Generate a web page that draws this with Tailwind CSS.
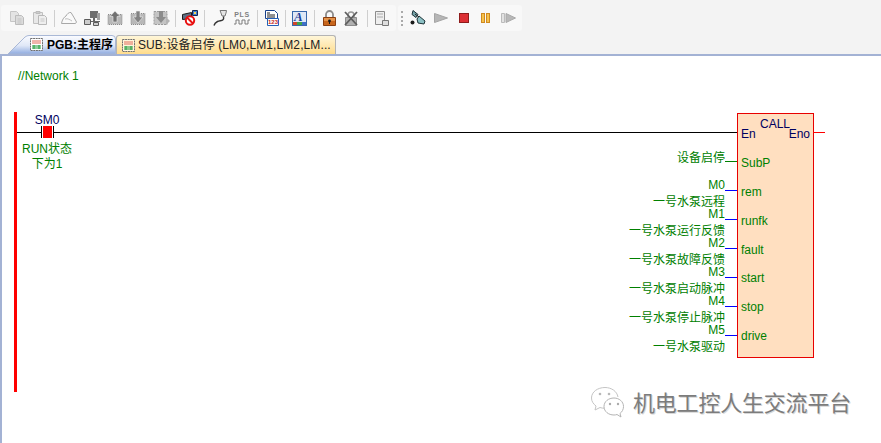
<!DOCTYPE html>
<html lang="en">
<head>
  <meta charset="UTF-8">
  <title>PGB</title>
  <script src="https://cdn.jsdelivr.net/npm/@tailwindcss/browser@4"></script>
</head>
<body class="w-[881px] h-[443px] overflow-hidden bg-white font-['Liberation_Sans','Noto_Sans_CJK_SC',sans-serif]">
  <!-- toolbar -->
  <div class="h-[33px] bg-[#f3f3f3] flex items-start pt-[5px] pl-[1px]">
    <div class="h-[26px] w-[395px] bg-[#f8f8f8] rounded-[3px] flex items-center pl-[9px]">
      <!-- copy -->
      <svg class="w-[14px] h-[14px]" viewBox="0 0 14 14"><path d="M.5.5h6l2 2v8h-8z" fill="#e4e4e4" stroke="#c6c6c6"/><path d="M5.500 4.500h6l2 2v7h-8z" fill="#dcdcdc" stroke="#bcbcbc"/><path d="M7.500 8h4M7.500 10h4M7.500 12h4" stroke="#c4c4c4"/></svg>
      <!-- paste -->
      <svg class="w-[14px] h-[14px] ml-[9px]" viewBox="0 0 14 14"><path d="M.5 1.500h9v11h-9z" fill="#e8e8e8" stroke="#c0c0c0"/><path d="M3 .5h4v2H3z" fill="#ccc" stroke="#bbb"/><path d="M5.500 4.500h6l2 2v7h-8z" fill="#eee" stroke="#b8b8b8"/><path d="M7.500 8h4M7.500 10h4" stroke="#c8c8c8"/></svg>
      <div class="w-px h-[17px] bg-[#cfcfcf] ml-[7px]"></div>
      <!-- cloud -->
      <svg class="w-4 h-[14px] ml-[6px]" viewBox="0 0 16 14"><path d="M.5 12.500C1 9 3 6 5 5c1-2 3-4 5-3.500 1.500 3 4 6 5.500 9.500l-1 1.500z" fill="#fafafa" stroke="#a8a8a8"/><path d="M4 8c3-1 5 1 7 2" fill="none" stroke="#c0c0c0"/></svg>
      <!-- network -->
      <svg class="w-4 h-4 ml-[7px]" viewBox="0 0 16 16"><path d="M6 1h8v7H6z" fill="#6e6e6e"/><path d="M13 3h3v7h-3z" fill="#a0a0a0"/><path d="M9 8h2v4H9zM0 11h16v1H0z" fill="#666"/><path d="M.5 9.500h6v5h-6zM9.500 12.500h5v3h-5z" fill="#ccc" stroke="#5c5c5c"/></svg>
      <!-- upload -->
      <svg class="w-4 h-4 ml-[7px]" viewBox="0 0 16 16"><path d="M1 4.500h14v10H1z" fill="#b8b8b8" stroke="#8c8c8c" stroke-dasharray="1 1"/><path d="M8 1l5 5.500h-3V12H6V6.500H3z" fill="#727272" stroke="#eee" stroke-width=".6"/></svg>
      <!-- download -->
      <svg class="w-4 h-4 ml-[7px]" viewBox="0 0 16 16"><path d="M1 3.500h14v11H1z" fill="#b8b8b8" stroke="#8c8c8c" stroke-dasharray="1 1"/><path d="M6 1h4v6h3l-5 6-5-6h3z" fill="#828282" stroke="#eee" stroke-width=".6"/></svg>
      <!-- compare -->
      <svg class="w-[17px] h-4 ml-[7px]" viewBox="0 0 17 16"><path d="M1 1.500h13v13H1z" fill="#c4c4c4" stroke="#9c9c9c" stroke-dasharray="2 1"/><path d="M6 1h4v6h3l-5 6-5-6h3z" fill="#8c8c8c"/><path d="M13 7l4 4-4 4z" fill="#b4b4b4"/></svg>
      <div class="w-px h-[17px] bg-[#cfcfcf] ml-[5px]"></div>
      <!-- no comm -->
      <svg class="w-4 h-4 ml-[6px]" viewBox="0 0 16 16"><path d="M.5 4.500l9-2v6l-9 1z" fill="#5d6f84" stroke="#1c1c1c"/><path d="M10.500.5h5v5h-5z" fill="#3f7fd0" stroke="#14264d"/><path d="M12 2h2v2h-2z" fill="#f5d458"/><circle cx="8" cy="10.500" r="4.200" fill="#fff" stroke="#e81010" stroke-width="2"/><path d="M5 7.500l6 6" stroke="#e81010" stroke-width="2"/></svg>
      <div class="w-px h-[17px] bg-[#cfcfcf] ml-[6px]"></div>
      <!-- cable -->
      <svg class="w-[15px] h-4 ml-[7px]" viewBox="0 0 15 16"><path d="M8 .5h6.500L14 3l-1 3h-3L9 3z" fill="#e4e4e4" stroke="#777"/><path d="M11.500 6.500c1 5-3 3.500-6 5-2 1-3 2-3.500 4" fill="none" stroke="#333" stroke-width="1.400"/></svg>
      <!-- PLS pulse -->
      <div class="w-4 h-[14px] ml-[7px] flex flex-col items-center text-[#808080] leading-none">
        <span class="text-[7px] font-bold h-[8px] tracking-[.6px]">PLS</span>
        <svg class="w-4 h-[6px]" viewBox="0 0 16 6"><path d="M0 5h2V1h3v4h3V1h3v4h3V1h2" fill="none" stroke="#7c7c7c"/></svg>
      </div>
      <div class="w-px h-[17px] bg-[#cfcfcf] ml-[7px]"></div>
      <!-- symbol table -->
      <div class="relative w-[14px] h-4 ml-[7px] overflow-hidden">
        <svg class="w-[14px] h-4" viewBox="0 0 14 16"><path d="M.5.5h9l3 3v5h-12z" fill="#fff" stroke="#17408b"/><path d="M2 3h3M2 5h8M2 7h8" stroke="#222"/><path d="M2.500 8.500h11v7h-11z" fill="#fff" stroke="#2460b8"/></svg>
        <span class="absolute left-[3px] top-[9px] text-[6px] leading-[6px] font-bold text-[#c8281c] whitespace-nowrap">123</span>
      </div>
      <div class="w-px h-[17px] bg-[#cfcfcf] ml-[6px]"></div>
      <!-- font -->
      <div class="relative w-[15px] h-[15px] ml-[6px] bg-[#dfe8f6] border border-[#3768ac]">
        <span class="absolute left-[1px] -top-[2px] text-[13px] leading-[13px] font-['Liberation_Serif',serif] font-bold italic text-[#1d3f9a]">A</span>
        <div class="absolute left-0 bottom-0 flex h-[3px] w-full">
          <div class="w-1/3 bg-[#d0452a]"></div>
          <div class="w-1/3 bg-[#3ea34a]"></div>
          <div class="w-1/3 bg-[#3e6fca]"></div>
        </div>
      </div>
      <div class="w-px h-[17px] bg-[#cfcfcf] ml-[7px]"></div>
      <!-- lock -->
      <svg class="w-[13px] h-4 ml-2" viewBox="0 0 13 16"><path d="M3 8V4.500a3.500 3.500 0 0 1 7 0V8" fill="none" stroke="#8c8c8c" stroke-width="1.800"/><path d="M.5 7.500h12v8H.5z" fill="#c8661c" stroke="#8a3e10"/><path d="M1 8h11v3H1z" fill="#e4934a"/><circle cx="6.500" cy="11" r="1.400" fill="#1a1a1a"/><path d="M6 11h1v3H6z" fill="#1a1a1a"/></svg>
      <!-- unlock crossed -->
      <svg class="w-[14px] h-[15px] ml-2" viewBox="0 0 14 15"><path d="M4 7V4a3 3 0 0 1 6 0v3" fill="none" stroke="#999" stroke-width="1.600"/><path d="M1.500 6.500h11v8h-11z" fill="#b0b0b0" stroke="#8c8c8c"/><path d="M1 1l12 13M13 1 1 14" stroke="#5e5e5e" stroke-width="1.800"/></svg>
      <div class="w-px h-[17px] bg-[#cfcfcf] ml-[9px]"></div>
      <!-- doc -->
      <svg class="w-[14px] h-[15px] ml-[7px]" viewBox="0 0 14 15"><path d="M.5.500h9v13h-9z" fill="#eee" stroke="#8c8c8c"/><path d="M2 3h6M2 6h6" stroke="#aaa"/><path d="M7.500 9.500h6v5h-6z" fill="#dedede" stroke="#777"/></svg>
    </div>
    <div class="h-[26px] w-[124px] bg-[#f8f8f8] rounded-[3px] ml-[2px] flex items-center">
      <div class="w-px h-[15px] ml-[3px] border-l-2 border-dotted border-[#aaa]"></div>
      <!-- run mode -->
      <svg class="w-4 h-4 ml-[7px]" viewBox="0 0 16 16"><path d="M3 .5l5 4-2 3-4-3z" fill="#74a2a8" stroke="#1d3338"/><path d="M9 6l6 5-1 3-6-1-1-4z" fill="#8cc0c4" stroke="#1d3338"/><circle cx="2.500" cy="12.500" r="2" fill="#1a1a1a"/><path d="M5 4l4 3" stroke="#222"/></svg>
      <!-- play -->
      <svg class="w-[14px] h-[10px] ml-[8px]" viewBox="0 0 14 10"><path d="M.5.5l13 4.500-13 4.500z" fill="#b6b6b6" stroke="#a4a4a4"/></svg>
      <!-- stop -->
      <div class="w-[10px] h-[10px] ml-[11px] bg-[#dc3034] border border-[#8e1c1c]"></div>
      <!-- pause -->
      <div class="ml-[12px] flex gap-px">
        <div class="w-1 h-[10px] bg-[#f6c24c] border border-[#d08a20]"></div>
        <div class="w-1 h-[10px] bg-[#f6c24c] border border-[#d08a20]"></div>
      </div>
      <!-- step -->
      <svg class="w-[15px] h-[10px] ml-[11px]" viewBox="0 0 15 10"><path d="M.5.5h3v9h-3z" fill="#e2e2e2" stroke="#bbb"/><path d="M5 .5l9.500 4.500-9.500 4.500z" fill="#b8b8b8" stroke="#a8a8a8"/></svg>
    </div>
  </div>
  <!-- tabs -->
  <div class="h-[21px] bg-[#f3f3f3] flex items-end pl-[8px] text-[12px] leading-none">
    <div class="relative h-[19px] w-[108px] pl-[22px] flex items-center gap-[4px] font-bold text-black">
      <svg class="absolute left-0 top-0 w-[108px] h-[19px]" viewBox="0 0 108 19">
        <defs><linearGradient id="tabfill" x1="0" y1="0" x2="0" y2="1"><stop offset="0" stop-color="#fbfcff"/><stop offset=".55" stop-color="#dfe7f7"/><stop offset="1" stop-color="#8fabe0"/></linearGradient></defs>
        <path d="M0 19 17 2Q19 .5 21 .5H104Q107.500 .5 107.500 4V19z" fill="url(#tabfill)" stroke="#a9b8d6"/>
      </svg>
      <svg class="relative w-[13px] h-[13px] shrink-0" viewBox="0 0 13 13"><path d="M.5.5h12v12H.5z" fill="#fff" stroke="#707070" stroke-dasharray="2 .6"/><path d="M2 3h9M2 5h9" stroke="#e06a5a"/><path d="M2 8h9M2 10h9" stroke="#1e9a3c"/><path d="M4 7v4M9 7v4" stroke="#1e9a3c"/></svg>
      <span class="relative whitespace-nowrap">PGB:主程序</span>
    </div>
    <div class="h-[19px] w-[220px] bg-gradient-to-b from-[#fff6d8] to-[#ffdc8c] border border-b-0 border-[#b4b4b4] rounded-t-[3px] flex items-center pl-[5px] gap-[3px] text-[#222] tracking-[.1px]">
      <svg class="w-[13px] h-[13px] shrink-0" viewBox="0 0 13 13"><path d="M.5.5h12v12H.5z" fill="#fff6dc" stroke="#707070" stroke-dasharray="2 .6"/><path d="M2 3h9M2 5h9" stroke="#e06a5a"/><path d="M2 8h9M2 10h9" stroke="#1e9a3c"/><path d="M4 7v4M9 7v4" stroke="#1e9a3c"/></svg>
      <span class="whitespace-nowrap">SUB:设备启停 (LM0,LM1,LM2,LM...</span>
    </div>
  </div>
  <!-- ladder canvas -->
  <div class="relative h-[389px] bg-white border-t-2 border-l-2 border-[#a3b2d4] text-[12px] leading-[14px] text-[#008000]">
    <div class="absolute left-4 top-[13px]">//Network 1</div>
    <div class="absolute left-[12px] top-[56px] w-[3px] h-[280px] bg-[#ff0000]"></div>
    <div class="absolute left-[15px] top-[76px] w-[720px] h-px bg-black"></div>
    <!-- contact SM0 -->
    <div class="absolute left-[30px] top-[57px] w-[30px] text-center text-[#000060]">SM0</div>
    <div class="absolute left-[39px] top-[70px] w-[13px] h-[12px] bg-white border-x border-black px-px">
      <div class="h-full bg-[#ff0000]"></div>
    </div>
    <div class="absolute left-[15px] top-[86px] w-[60px] text-center leading-[15px]">RUN状态<br>下为1</div>
    <!-- labels on the left of the CALL box -->
    <div class="absolute right-[156px] top-[95px] text-right">设备启停</div>
    <div class="absolute left-[723px] top-[105px] w-3 h-px bg-[#008000]"></div>
    <div class="absolute right-[156px] top-[122px] text-right">M0<div class="mt-[3px]">一号水泵远程</div></div>
    <div class="absolute left-[723px] top-[134px] w-3 h-px bg-[#0000ff]"></div>
    <div class="absolute right-[156px] top-[151px] text-right">M1<div class="mt-[3px]">一号水泵运行反馈</div></div>
    <div class="absolute left-[723px] top-[163px] w-3 h-px bg-[#0000ff]"></div>
    <div class="absolute right-[156px] top-[180px] text-right">M2<div class="mt-[3px]">一号水泵故障反馈</div></div>
    <div class="absolute left-[723px] top-[192px] w-3 h-px bg-[#0000ff]"></div>
    <div class="absolute right-[156px] top-[209px] text-right">M3<div class="mt-[3px]">一号水泵启动脉冲</div></div>
    <div class="absolute left-[723px] top-[221px] w-3 h-px bg-[#0000ff]"></div>
    <div class="absolute right-[156px] top-[238px] text-right">M4<div class="mt-[3px]">一号水泵停止脉冲</div></div>
    <div class="absolute left-[723px] top-[250px] w-3 h-px bg-[#0000ff]"></div>
    <div class="absolute right-[156px] top-[267px] text-right">M5<div class="mt-[3px]">一号水泵驱动</div></div>
    <div class="absolute left-[723px] top-[279px] w-3 h-px bg-[#0000ff]"></div>
    <!-- CALL box -->
    <div class="absolute left-[735px] top-[57px] w-[77px] h-[245px] bg-[#ffdfc0] border border-[#e80000] flex flex-col pl-[3px] pt-[12px] leading-[16px]">
      <div class="absolute left-[22px] top-[2px] text-[#000060]">CALL</div>
      <div class="absolute right-[3px] top-[12px] text-[#000060]">Eno</div>
      <div class="h-[29px] text-[#000060]">En</div>
      <div class="h-[29px]">SubP</div>
      <div class="h-[29px]">rem</div>
      <div class="h-[29px]">runfk</div>
      <div class="h-[29px]">fault</div>
      <div class="h-[29px]">start</div>
      <div class="h-[29px]">stop</div>
      <div class="h-[29px]">drive</div>
    </div>
    <div class="absolute left-[811px] top-[76px] w-3 h-px bg-[#ff0000]"></div>
    <!-- watermark -->
    <div class="absolute left-[589px] top-[331px] flex items-start gap-[9px] text-[22px] leading-[26px] tracking-[-.2px] text-[#7c7c7c] [text-shadow:1px_1px_0_#d8d8d8]">
      <svg class="w-[33px] h-[31px]" viewBox="0 0 33 31"><path d="M14 .5C6.500 .5.500 5 .5 11c0 3.500 2 6 4.500 8l-1 4 5-2.500c1.500.5 3 .8 5 .8" fill="#fff" stroke="#c4c4c4"/><path d="M14 .5c6.500 0 12 3.800 13 9.500" fill="none" stroke="#c4c4c4"/><circle cx="9" cy="7" r="1.300" fill="#b8b8b8"/><circle cx="18" cy="7" r="1.300" fill="#b8b8b8"/><path d="M23 11c-5.500 0-10 3.500-10 8.500S17.500 28 23 28c1 0 2-.1 3-.5l4 2.500-1-3.500c2-1.500 3.500-4 3.500-7 0-5-4.500-8.500-9.500-8.500z" fill="#fff" stroke="#b4b4b4"/><circle cx="19" cy="17" r="1.200" fill="#aaa"/><circle cx="27" cy="17" r="1.200" fill="#aaa"/></svg>
      <span class="whitespace-nowrap mt-[4px]">机电工控人生交流平台</span>
    </div>
  </div>
</body>
</html>
